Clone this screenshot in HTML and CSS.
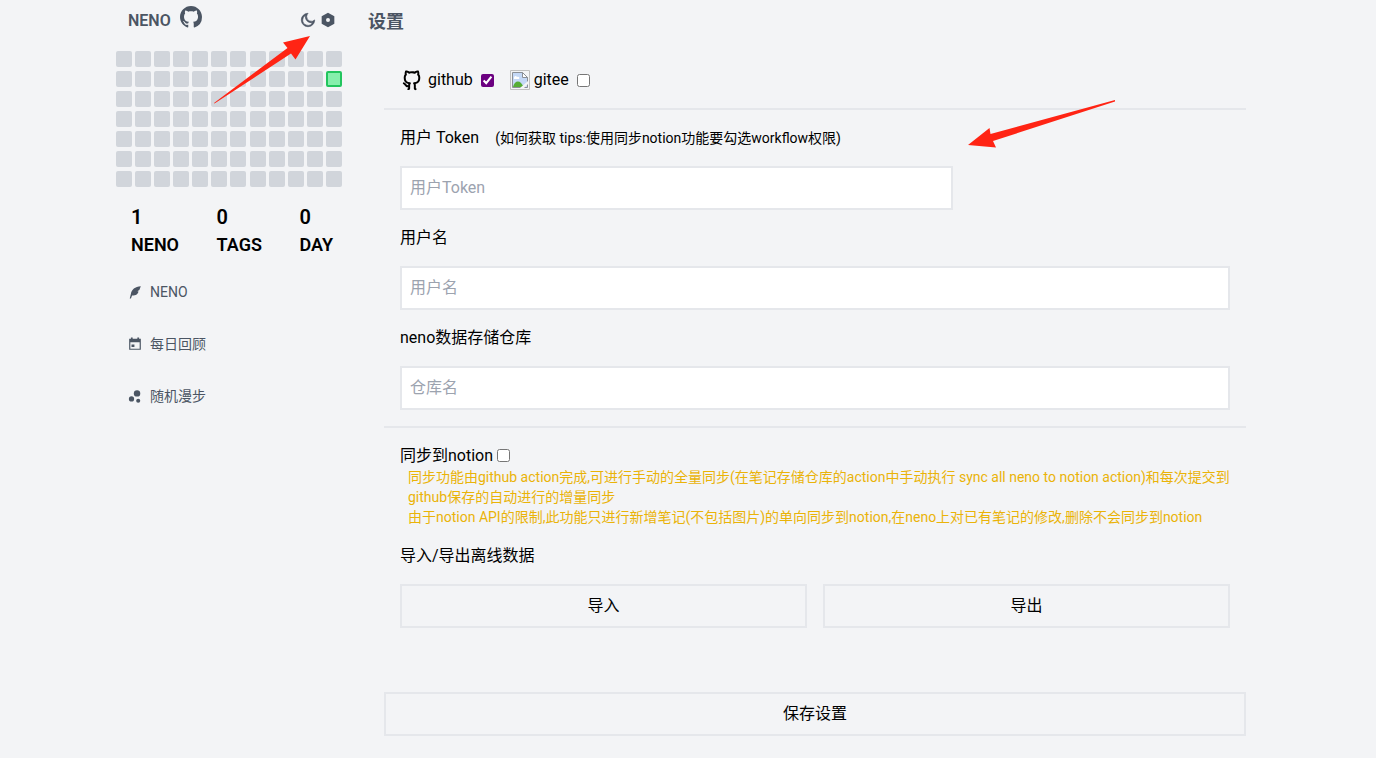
FILE: index.html
```html
<!DOCTYPE html>
<html lang="zh-CN">
	<head>
		<meta charset="UTF-8">
		<meta name="viewport" content="width=device-width, initial-scale=1">
		<title>NENO</title>
		<link rel="stylesheet" href="styles.css">
	</head>

	<body>
		<div class="page">
			<aside class="sidebar">
				<div class="brand">
					<span class="brandName">NENO</span>
					<a href="#" class="brandGithub" aria-label="github">
						<svg width="22" height="22" viewBox="0 0 16 16" fill="currentColor"><path d="M8 0C3.58 0 0 3.58 0 8c0 3.54 2.29 6.53 5.47 7.59.4.07.55-.17.55-.38 0-.19-.01-.82-.01-1.49-2.01.37-2.53-.49-2.69-.94-.09-.23-.48-.94-.82-1.13-.28-.15-.68-.52-.01-.53.63-.01 1.08.58 1.23.82.72 1.21 1.87.87 2.33.66.07-.52.28-.87.51-1.07-1.78-.2-3.64-.89-3.64-3.95 0-.87.31-1.59.82-2.15-.08-.2-.36-1.02.08-2.12 0 0 .67-.21 2.2.82.64-.18 1.32-.27 2-.27s1.36.09 2 .27c1.53-1.04 2.2-.82 2.2-.82.44 1.1.16 1.92.08 2.12.51.56.82 1.27.82 2.15 0 3.07-1.87 3.75-3.65 3.95.29.25.54.73.54 1.48 0 1.07-.01 1.93-.01 2.2 0 .21.15.46.55.38A8.01 8.01 0 0 0 16 8c0-4.42-3.58-8-8-8z"/></svg>
					</a>
					<div class="brandTools">
						<button class="iconButton" aria-label="dark mode">
							<svg width="16" height="16" viewBox="0 0 24 24" fill="currentColor" stroke="currentColor"><path d="M10 7a7 7 0 0 0 12 4.9v.1c0 5.523-4.477 10-10 10S2 17.523 2 12 6.477 2 12 2h.1A6.979 6.979 0 0 0 10 7zm-6 5a8 8 0 0 0 15.062 3.762A9 9 0 0 1 8.238 4.938 7.999 7.999 0 0 0 4 12z"/></svg>
						</button>
						<button class="iconButton" aria-label="settings">
							<svg width="16" height="16" viewBox="0 0 24 24" fill="currentColor"><path d="M12 1l9.5 5.5v11L12 23l-9.5-5.5v-11L12 1zm0 14a3 3 0 1 0 0-6 3 3 0 0 0 0 6z"/></svg>
						</button>
					</div>
				</div>

				<div id="heatmap" class="heatmap"></div>

				<div class="stats">
					<div class="stat"><div class="statNumber">1</div><div>NENO</div></div>
					<div class="stat"><div class="statNumber">0</div><div>TAGS</div></div>
					<div class="stat"><div class="statNumber">0</div><div>DAY</div></div>
				</div>

				<nav class="menu">
					<a href="#" class="menuItem">
						<svg width="14" height="14" viewBox="0 0 24 24" fill="currentColor"><path d="M22 2C12 3 6 7.500 5 15L3 23h2l2-5c7 0 10.500-3 11-7l-2-.5 3.500-2C20.500 6 21 4 22 2z"/></svg>
						<span>NENO</span>
					</a>
					<a href="#" class="menuItem">
						<svg width="14" height="14" viewBox="0 0 24 24" fill="currentColor"><path d="M17 3h5v19H2V3h3V1h3v2h8V1h3v2zM4 9v11h16V9H4zm2 4h5v4H6v-4z"/></svg>
						<span>每日回顾</span>
					</a>
					<a href="#" class="menuItem">
						<svg width="14" height="14" viewBox="0 0 24 24" fill="currentColor"><circle cx="15.500" cy="7.500" r="5.500"/><circle cx="6" cy="17" r="4.500"/><circle cx="17.500" cy="20" r="3.500"/></svg>
						<span>随机漫步</span>
					</a>
				</nav>
			</aside>

			<main class="main">
				<h1 class="title">设置</h1>

				<form class="settings">
					<div class="section platforms">
						<label class="platform">
							<svg width="24" height="24" viewBox="0 0 24 24" fill="currentColor"><path d="M5.883 18.653c-.3-.2-.558-.455-.86-.816a50.320 50.320 0 0 1-.466-.579c-.463-.575-.755-.84-1.057-.949a1 1 0 0 1 .676-1.883c.752.270 1.261.735 1.947 1.588-.094-.117.340.427.433.539.190.227.330.365.440.438.204.137.587.196 1.150.140.023-.382.094-.753.202-1.095C5.380 15.310 3.700 13.396 3.700 9.640c0-1.240.370-2.356 1.058-3.292-.218-.894-.185-1.975.302-3.192a1 1 0 0 1 .630-.582c.081-.024.127-.035.208-.047.803-.123 1.937.170 3.415 1.096A11.731 11.731 0 0 1 12 3.315c.912 0 1.818.104 2.684.308 1.477-.933 2.613-1.226 3.422-1.096.085.013.157.030.218.050a1 1 0 0 1 .616.580c.487 1.216.520 2.297.302 3.190.691.936 1.058 2.045 1.058 3.293 0 3.757-1.674 5.665-4.642 6.392.125.415.190.879.190 1.380a300.492 300.492 0 0 1-.012 2.716 1 1 0 0 1-.019 1.958c-1.139.228-1.983-.532-1.983-1.525l.002-.446.005-.705c.005-.708.007-1.338.007-1.998 0-.697-.183-1.152-.425-1.360-.661-.570-.326-1.655.540-1.752 2.967-.333 4.337-1.482 4.337-4.660 0-.955-.312-1.744-.913-2.404a1 1 0 0 1-.190-1.045c.166-.414.237-.957.096-1.614l-.010.003c-.491.139-1.110.440-1.858.949a1 1 0 0 1-.833.135A9.626 9.626 0 0 0 12 5.315c-.890 0-1.772.119-2.592.350a1 1 0 0 1-.830-.134c-.752-.507-1.374-.807-1.868-.947-.144.653-.073 1.194.092 1.607a1 1 0 0 1-.189 1.045C6.016 7.890 5.700 8.694 5.700 9.640c0 3.172 1.371 4.328 4.322 4.660.865.097 1.201 1.177.544 1.748-.192.168-.429.732-.429 1.364v3.150c0 .986-.835 1.725-1.960 1.528a1 1 0 0 1-.040-1.962v-.990c-.910.061-1.662-.088-2.254-.485z"/></svg>
							<span>github</span>
							<input type="checkbox" class="check checkGithub" checked>
						</label>
						<label class="platform">
							<svg width="20" height="20" viewBox="0 0 20 20"><path d="M.5.5h19v19H.5z" fill="none" stroke="#c0c0c0"/><path d="M2.500 2.500h10l5 5v10h-15z" fill="#c4d8f6" stroke="#8a8f96"/><path d="M3 17c1-5 5-7 8-4l3 4z" fill="#55ad35"/><path d="M4 8c0-2 2-3 3-1 2-1 3 1 2 2H4z" fill="#fff"/><path d="M12.500 2.500v5h5z" fill="#fff" stroke="#8a8f96"/><path d="M10 18l8-7v3l-4 4z" fill="#f3f4f6"/></svg>
							<span>gitee</span>
							<input type="checkbox" class="check">
						</label>
					</div>

					<div class="section">
						<div class="field">
							<div class="labelRow">
								<label for="token">用户 Token</label>
								<span class="hint">(<a href="#" class="hintLink">如何获取</a> tips:使用同步notion功能要勾选workflow权限)</span>
							</div>
							<input id="token" class="textInput tokenInput" type="text" placeholder="用户Token">
						</div>
						<div class="field">
							<label for="username">用户名</label>
							<input id="username" class="textInput" type="text" placeholder="用户名">
						</div>
						<div class="field">
							<label for="repo">neno数据存储仓库</label>
							<input id="repo" class="textInput" type="text" placeholder="仓库名">
						</div>
					</div>

					<div class="section lastSection">
						<div>
							<label class="sync">同步到notion<input type="checkbox" class="check"></label>
							<div class="tips">
								<p>同步功能由github action完成,可进行手动的全量同步(在笔记存储仓库的action中手动执行 sync all neno to notion action)和每次提交到github保存的自动进行的增量同步</p>
								<p>由于notion API的限制,此功能只进行新增笔记(不包括图片)的单向同步到notion,在neno上对已有笔记的修改,删除不会同步到notion</p>
							</div>
						</div>
						<div class="field">
							<div>导入/导出离线数据</div>
							<div class="buttonRow">
								<button type="button" class="button">导入</button>
								<button type="button" class="button">导出</button>
							</div>
						</div>
					</div>

					<button type="button" class="button buttonSave">保存设置</button>
				</form>
			</main>

			<!-- arrows drawn over the page -->
			<svg class="arrow arrowSettings" width="96" height="68" viewBox="0 0 96 68"><path d="M96 0L69 6.500l4.500 5.500L0 67l.5.5L77 17.500l4.500 6z" fill="#ff2414"/></svg>
			<svg class="arrow arrowToken" width="148" height="48" viewBox="0 0 148 48"><path d="M0 45L21.500 28l1 6L147 0v1.500L25 41l3 6.500z" fill="#ff2414"/></svg>
		</div>

		<script>
			var heatmap = document.getElementById('heatmap');
			var today = 23;

			for (var i = 0; i < 84; i++) {
				var day = document.createElement('div');
				day.className = i == today ? 'day dayToday' : 'day';
				heatmap.appendChild(day);
			}
		</script>
	</body>
</html>
```

FILE: styles.css
```css
* {
	box-sizing: border-box;
}

body {
	margin: 0;
	background-color: #f3f4f6;
	color: #000;
	font-family: Roboto, "Noto Sans CJK SC", sans-serif;
	font-size: 16px;
	line-height: 24px;
}

a {
	color: inherit;
	text-decoration: none;
}

p {
	margin: 0;
}

svg {
	display: block;
	flex-shrink: 0;
}

.page {
	position: relative;
	display: flex;
	max-width: 1152px;
	margin: 0 auto;
}

/*---------------------------SIDEBAR---------------------------*/
.sidebar {
	flex: 0 0 240px;
	padding: 6px 10px 0 4px;
}

.brand {
	display: flex;
	height: 28px;
	padding: 0 6px 0 12px;
	color: #4b5563;
}

.brandName {
	font-weight: 600;
	line-height: 30px;
}

.brandGithub {
	margin-left: 9px;
}

.brandTools {
	display: flex;
	align-items: center;
	gap: 4px;
	margin-left: auto;
}

.iconButton {
	padding: 0;
	border: none;
	background: none;
	color: inherit;
	cursor: pointer;
}

.heatmap {
	display: grid;
	grid-template-columns: repeat(12, 16px);
	justify-content: space-between;
	row-gap: 4px;
	margin-top: 17px;
}

.day {
	height: 16px;
	border-radius: 2px;
	background-color: #d1d5db;
}

.dayToday {
	border: 2px solid #22c55e;
	background-color: #86efac;
}

.stats {
	display: flex;
	justify-content: space-between;
	margin-top: 16px;
	padding: 0 9px 0 15px;
}

.stat {
	font-size: 18px;
	font-weight: 600;
	line-height: 28px;
}

.statNumber {
	font-size: 20px;
}

.menu {
	display: flex;
	flex-direction: column;
	gap: 32px;
	margin-top: 23px;
	padding-left: 12px;
}

.menuItem {
	display: flex;
	align-items: center;
	gap: 8px;
	color: #4b5563;
	font-size: 14px;
	line-height: 20px;
}

/*---------------------------SETTINGS---------------------------*/
.main {
	flex: 1;
	min-width: 0;
	padding: 8px 18px 22px 16px;
}

.title {
	margin: 0;
	color: #4b5563;
	font-size: 18px;
	font-weight: 600;
	line-height: 28px;
}

.settings {
	margin: 16px 0 0 16px;
}

.section {
	display: flex;
	flex-direction: column;
	gap: 16px;
	padding: 16px;
	border-bottom: 2px solid #e5e7eb;
}

.platforms {
	flex-direction: row;
	gap: 12px;
}

.lastSection {
	border-bottom: none;
}

.platform {
	display: flex;
	align-items: center;
	gap: 4px;
}

.check {
	width: 13px;
	height: 13px;
	margin: 0 4px;
}

.checkGithub {
	accent-color: #6b0080;
}

.field {
	display: flex;
	flex-direction: column;
	gap: 16px;
}

.labelRow {
	display: flex;
	gap: 16px;
}

.hint {
	font-size: 14px;
}

.textInput {
	width: 100%;
	height: 44px;
	padding: 7px 8px 9px;
	border: 2px solid #e5e7eb;
	background-color: #fff;
	font: inherit;
}

.textInput::placeholder {
	color: #9ca3af;
}

.tokenInput {
	width: 66.6667%;
}

.sync {
	display: block;
	height: 23px;
}

.sync .check {
	vertical-align: -1px;
}

.tips {
	padding: 0 0 1px 8px;
	color: #eab308;
	font-size: 14px;
	line-height: 20px;
}

.buttonRow {
	display: flex;
	gap: 16px;
}

.button {
	flex: 1;
	height: 44px;
	padding: 8px;
	border: 2px solid #e5e7eb;
	background-color: transparent;
	color: #000;
	font: inherit;
	cursor: pointer;
}

.buttonSave {
	width: 100%;
	margin-top: 48px;
}

/*---------------------------ARROWS---------------------------*/
.arrow {
	position: absolute;
	pointer-events: none;
}

.arrowSettings {
	left: 102px;
	top: 36px;
}

.arrowToken {
	left: 856px;
	top: 100px;
}
```
